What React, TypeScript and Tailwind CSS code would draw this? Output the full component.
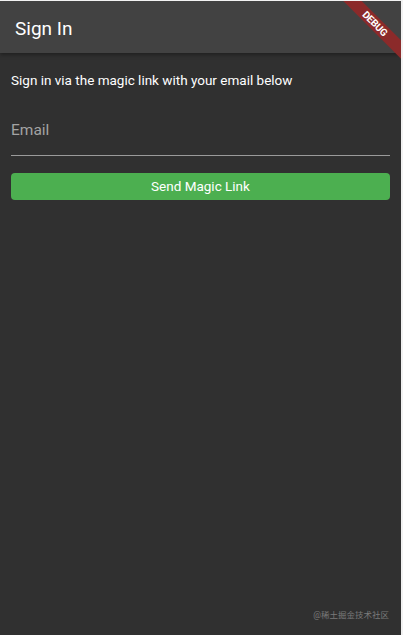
import React from "react";

export default function App() {
  return (
    <div
      className="w-[403px] h-[635px] bg-[#f2f2f2] pt-[1px] pr-[2px] overflow-hidden"
      style={{ fontFamily: "Roboto, 'Noto Sans CJK SC', sans-serif" }}
    >
      <div className="relative w-full h-[634px] bg-[#303030] overflow-hidden flex flex-col">
        <div className="h-[52px] bg-[#424242] flex items-center pt-[3px] px-[15px] shadow-[0_2px_4px_rgba(0,0,0,0.35)] relative z-10">
          <span className="text-white text-[19px] leading-none">Sign In</span>
        </div>
        <div className="px-[11px] flex flex-col">
          <div className="mt-[17px] h-[20px] flex items-center text-white text-[13.5px]">
            Sign in via the magic link with your email below
          </div>
          <div className="h-[66px] flex items-end border-b border-[#9a9a9a]">
            <span className="text-[#a3a3a3] text-[15.5px] mb-[13px]">Email</span>
          </div>
          <button className="mt-[17px] h-[27px] rounded-[4px] bg-[#4caf50] text-white text-[13.5px] flex items-center justify-center">
            Send Magic Link
          </button>
        </div>
        <div className="mt-auto mb-[13px] self-end mr-[12px] text-[8.5px] text-[#7a7a7a]">
          @稀土掘金技术社区
        </div>
        <div className="absolute top-0 right-0 w-[70px] h-[70px] overflow-hidden z-20 pointer-events-none">
          <div className="absolute left-[-16px] top-[16px] w-[120px] h-[13px] bg-[#8b2a2a] rotate-45 flex items-center justify-center">
            <span className="text-white text-[10px] font-bold tracking-tight leading-none">DEBUG</span>
          </div>
        </div>
      </div>
    </div>
  );
}
